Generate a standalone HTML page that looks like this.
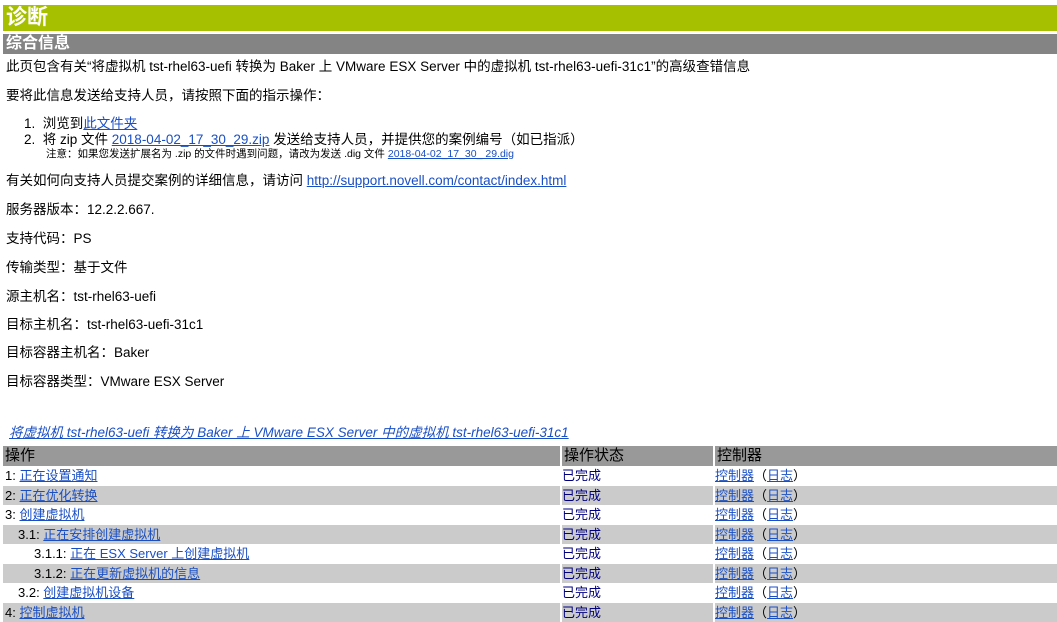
<!DOCTYPE html>
<html><head><meta charset="utf-8"><style>
body{margin:0;width:1057px;height:620px;overflow:hidden;background:#fff;font-family:"Liberation Sans","Noto Sans CJK SC",sans-serif;font-size:13px;color:#000;position:relative}
.a{position:absolute;white-space:nowrap;font-size:13.5px}
a{color:#1a4fc4;text-decoration:underline}
.h1{position:absolute;left:3px;top:5px;width:1054px;height:26px;background:#a6c000;color:#fff;font-weight:bold;font-size:21px;line-height:26px;padding-left:3px;box-sizing:border-box}
.h2{position:absolute;left:3px;top:34px;width:1054px;height:20px;background:#848484;color:#fff;font-weight:bold;font-size:16px;line-height:20px;padding-left:3px;box-sizing:border-box}
.row{position:absolute;left:3px;width:1054px;height:19px;line-height:19px}
.row div{position:absolute;top:0;height:19px}
.c1{left:0;width:557px;padding-left:2px;box-sizing:border-box}
.c2{left:559px;width:151px;color:#000080}
.c3{left:712px;width:342px}
.g div{background:#cbcbcb}
.hd div{background:#999;height:20px;font-size:15px;line-height:20px;padding-left:2px;box-sizing:border-box}
</style></head><body>
<div class="h1">诊断</div>
<div class="h2">综合信息</div>
<div class="a" style="left:6px;top:55px">此页包含有关“将虚拟机 tst-rhel63-uefi 转换为 Baker 上 VMware ESX Server 中的虚拟机 tst-rhel63-uefi-31c1”的高级查错信息</div>
<div class="a" style="left:6px;top:84px">要将此信息发送给支持人员，请按照下面的指示操作：</div>
<div class="a" style="left:24px;top:112px">1.&nbsp; 浏览到<a>此文件夹</a></div>
<div class="a" style="left:24px;top:128px">2.&nbsp; 将 zip 文件 <a>2018-04-02_17_30_29.zip</a> 发送给支持人员，并提供您的案例编号（如已指派）</div>
<div class="a" style="left:46px;top:146px;font-size:10.5px">注意：如果您发送扩展名为 .zip 的文件时遇到问题，请改为发送 .dig 文件 <a>2018-04-02_17_30_ 29.dig</a></div>
<div class="a" style="left:6px;top:169px">有关如何向支持人员提交案例的详细信息，请访问 <a>http://support.novell.com/contact/index.html</a></div>
<div class="a" style="left:6px;top:198px">服务器版本：12.2.2.667.</div>
<div class="a" style="left:6px;top:227px">支持代码：PS</div>
<div class="a" style="left:6px;top:256px">传输类型：基于文件</div>
<div class="a" style="left:6px;top:285px">源主机名：tst-rhel63-uefi</div>
<div class="a" style="left:6px;top:313px">目标主机名：tst-rhel63-uefi-31c1</div>
<div class="a" style="left:6px;top:341px">目标容器主机名：Baker</div>
<div class="a" style="left:6px;top:370px">目标容器类型：VMware ESX Server</div>
<div class="a" style="left:9px;top:421px;font-style:italic"><a>将虚拟机 tst-rhel63-uefi 转换为 Baker 上 VMware ESX Server 中的虚拟机 tst-rhel63-uefi-31c1</a></div>
<div class="row hd" style="top:446px"><div class="c1">操作</div><div class="c2" style="color:#000">操作状态</div><div class="c3">控制器</div></div>
<div class="row" style="top:466px"><div class="c1">1: <a>正在设置通知</a></div><div class="c2">已完成</div><div class="c3"><a>控制器</a>（<a>日志</a>）</div></div>
<div class="row g" style="top:486px"><div class="c1">2: <a>正在优化转换</a></div><div class="c2">已完成</div><div class="c3"><a>控制器</a>（<a>日志</a>）</div></div>
<div class="row" style="top:505px"><div class="c1">3: <a>创建虚拟机</a></div><div class="c2">已完成</div><div class="c3"><a>控制器</a>（<a>日志</a>）</div></div>
<div class="row g" style="top:525px"><div class="c1" style="padding-left:15px">3.1: <a>正在安排创建虚拟机</a></div><div class="c2">已完成</div><div class="c3"><a>控制器</a>（<a>日志</a>）</div></div>
<div class="row" style="top:544px"><div class="c1" style="padding-left:31px">3.1.1: <a>正在 ESX Server 上创建虚拟机</a></div><div class="c2">已完成</div><div class="c3"><a>控制器</a>（<a>日志</a>）</div></div>
<div class="row g" style="top:564px"><div class="c1" style="padding-left:31px">3.1.2: <a>正在更新虚拟机的信息</a></div><div class="c2">已完成</div><div class="c3"><a>控制器</a>（<a>日志</a>）</div></div>
<div class="row" style="top:583px"><div class="c1" style="padding-left:15px">3.2: <a>创建虚拟机设备</a></div><div class="c2">已完成</div><div class="c3"><a>控制器</a>（<a>日志</a>）</div></div>
<div class="row g" style="top:603px"><div class="c1">4: <a>控制虚拟机</a></div><div class="c2">已完成</div><div class="c3"><a>控制器</a>（<a>日志</a>）</div></div>
</body></html>
